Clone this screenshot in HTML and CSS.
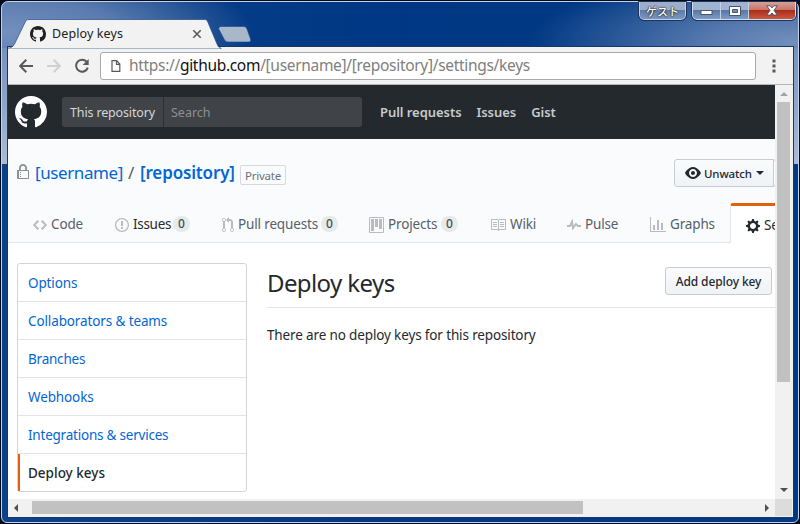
FILE: index.html
```
<!DOCTYPE html>
<html lang="en">
<head>
<meta charset="utf-8">
<title>Deploy keys</title>
<link rel="stylesheet" href="styles.css">
</head>
<body>
<svg class="defs" width="0" height="0">
  <symbol id="mark" viewBox="0 0 16 16"><path d="M8 0C3.58 0 0 3.58 0 8c0 3.54 2.29 6.53 5.47 7.59.4.07.55-.17.55-.38 0-.19-.01-.82-.01-1.49-2.01.37-2.53-.49-2.69-.94-.09-.23-.48-.94-.82-1.13-.28-.15-.68-.52-.01-.53.63-.01 1.08.58 1.23.82.72 1.21 1.87.87 2.33.66.07-.52.28-.87.51-1.07-1.78-.2-3.64-.89-3.64-3.95 0-.87.31-1.59.82-2.15-.08-.2-.36-1.02.08-2.12 0 0 .67-.21 2.2.82.64-.18 1.32-.27 2-.27.68 0 1.36.09 2 .27 1.53-1.04 2.2-.82 2.2-.82.44 1.1.16 1.92.08 2.12.51.56.82 1.27.82 2.15 0 3.07-1.87 3.75-3.65 3.95.29.25.54.73.54 1.48 0 1.07-.01 1.93-.01 2.2 0 .21.15.46.55.38A8.013 8.013 0 0 0 16 8c0-4.42-3.58-8-8-8z"/></symbol>
</svg>
<div class="window">
  <header class="titlebar">
    <svg class="tabshape" width="260" height="30" viewBox="0 0 260 30"><path d="M-1 29C3 29 5 28 6.500 25L17 3.500C18 1 19 .5 21 .5H196C198.500 .5 199 1 200 3.500L209 25C210.500 28 211 29 213 29V30H-1z" fill="#f2f2f2" stroke="#244a80" stroke-opacity=".7"/><path d="M212 7.500H235C237 7.500 238 8 239 10L242.500 20C243 22 242.500 23 240.500 23H220C218 23 217 22 216 20L210.500 9.500Z" fill="#a9b7cb" stroke="#1d4687" stroke-opacity=".6"/></svg>
    <div class="tab">
      <svg class="favicon" width="16" height="16"><use href="#mark"/></svg>
      <span class="tab-title">Deploy keys</span>
      <svg width="10" height="10" viewBox="0 0 10 10"><path d="M1.300 1.300l7.400 7.400M8.700 1.300L1.300 8.700" stroke="#5a5a5a" stroke-width="1.600"/></svg>
    </div>
    <div class="caption">
      <div class="guest">ゲスト</div>
      <div class="controls">
        <span class="ctl"><svg width="13" height="7"><rect x="1" y="1.500" width="11" height="4" fill="#fff" stroke="#4d5566"/></svg></span>
        <span class="ctl"><svg width="12" height="10"><path d="M.5.5h11v9H.5z" fill="#fff" stroke="#4d5566"/><path d="M3.500 3.500h5v3h-5z" fill="#6f8fbb" stroke="#4d5566"/></svg></span>
        <span class="ctl close"><svg width="12" height="11" viewBox="0 0 12 11"><path d="M.7.8h3.500L6 2.900 7.800.8h3.500L8 5.400l3.300 4.700H7.800L6 8 4.200 10.100H.7L4 5.400z" fill="#fff" stroke="#51536a"/></svg></span>
      </div>
    </div>
  </header>
  <div class="client">
    <div class="toolbar">
      <svg class="back" width="14" height="14" viewBox="0 0 14 14"><path d="M14 7H1.500M7.300.8L1.200 7l6.100 6.200" fill="none" stroke="#5a5a5a" stroke-width="2"/></svg>
      <svg class="forward" width="14" height="14" viewBox="0 0 14 14"><path d="M0 7h12.500M6.700.8L12.800 7l-6.100 6.200" fill="none" stroke="#d0d0d0" stroke-width="2"/></svg>
      <svg class="reload" width="16" height="16" viewBox="0 0 16 16"><path d="M12.600 3.700A6 6 0 1 0 13.800 9.600" fill="none" stroke="#5a5a5a" stroke-width="2"/><path d="M14.700 1v6H8.700z" fill="#5a5a5a"/></svg>
      <div class="omnibox">
        <svg width="10" height="12" viewBox="0 0 10 12"><path d="M1 .7h4.700L8.800 4v7.300H1zM5.500 1v3.300h3.300" fill="none" stroke="#5a5a5a" stroke-width="1.200"/></svg>
        <span class="url">https://<b>github.com</b>/[username]/[repository]/settings/keys</span>
      </div>
      <svg class="menu" width="4" height="14" viewBox="0 0 4 14"><path d="M.5.500h3v3h-3zM.5 5.500h3v3h-3zM.5 10.500h3v3h-3z" fill="#5a5a5a"/></svg>
    </div>
    <div class="viewport">
      <div class="page">
        <div class="gh-header">
          <svg class="gh-mark" width="32" height="32"><use href="#mark"/></svg>
          <div class="search"><span class="scope">This repository</span><span class="field">Search</span></div>
          <nav class="gh-nav"><a>Pull requests</a><a>Issues</a><a>Gist</a></nav>
        </div>
        <div class="repohead">
          <div class="repo-row">
            <svg class="lock" width="12" height="16" viewBox="0 0 12 16"><path d="M4 13H3v-1h1v1zm8-6v7c0 .55-.45 1-1 1H1c-.55 0-1-.45-1-1V7c0-.55.45-1 1-1h1V4c0-2.200 1.800-4 4-4s4 1.800 4 4v2h1c.55 0 1 .45 1 1zM3.800 6h4.410V4c0-1.220-.98-2.200-2.200-2.200-1.220 0-2.200.98-2.200 2.200v2H3.800zM11 7H2v7h9V7zM4 8H3v1h1V8zm0 2H3v1h1v-1z"/></svg>
            <a class="owner">[username]</a><span class="slash">/</span><a class="repo">[repository]</a><span class="label">Private</span>
            <div class="btn watch"><svg width="16" height="16" viewBox="0 0 16 16"><path d="M8.060 2C3 2 0 8 0 8s3 6 8.060 6C13 14 16 8 16 8s-3-6-7.940-6zM8 12c-2.200 0-4-1.780-4-4 0-2.200 1.800-4 4-4 2.220 0 4 1.800 4 4 0 2.220-1.780 4-4 4zm2-4c0 1.110-.89 2-2 2-1.110 0-2-.89-2-2 0-1.110.89-2 2-2 1.110 0 2 .89 2 2z"/></svg><span>Unwatch</span><i class="caret"></i></div>
            <div class="btn count"></div>
          </div>
          <nav class="tabs">
            <a class="t-code"><svg width="14" height="16" viewBox="0 0 14 16"><path d="M9.500 3L8 4.500 11.500 8 8 11.500 9.500 13 14 8 9.500 3zm-5 0L0 8l4.500 5L6 11.500 2.500 8 6 4.500 4.500 3z"/></svg><span>Code</span></a>
            <a class="t-issues"><svg width="14" height="16" viewBox="0 0 14 16"><path d="M7 2.300c3.140 0 5.700 2.560 5.700 5.700s-2.560 5.700-5.700 5.700A5.710 5.710 0 0 1 1.300 8c0-3.140 2.560-5.700 5.700-5.700zM7 1C3.140 1 0 4.140 0 8s3.140 7 7 7 7-3.140 7-7-3.140-7-7-7zm1 3H6v5h2V4zm0 6H6v2h2v-2z"/></svg><span>Issues</span><em>0</em></a>
            <a class="t-pulls"><svg width="12" height="16" viewBox="0 0 12 16"><path d="M11 11.280V5c-.03-.78-.34-1.470-.94-2.060C9.460 2.350 8.780 2.030 8 2H7V0L4 3l3 3V4h1c.27.02.48.11.69.31.21.2.3.42.31.69v6.280A1.993 1.993 0 0 0 10 15a1.993 1.993 0 0 0 1-3.720zm-1 2.920c-.66 0-1.200-.55-1.200-1.200 0-.65.55-1.200 1.200-1.200.65 0 1.200.55 1.200 1.200 0 .65-.55 1.200-1.200 1.200zM4 3c0-1.110-.89-2-2-2a1.993 1.993 0 0 0-1 3.720v6.560A1.993 1.993 0 0 0 2 15a1.993 1.993 0 0 0 1-3.720V4.720c.59-.34 1-.98 1-1.720zm-.8 10c0 .66-.55 1.200-1.200 1.200-.65 0-1.200-.55-1.200-1.200 0-.65.55-1.200 1.200-1.200.65 0 1.200.55 1.200 1.200zM2 4.200C1.340 4.200.8 3.650.8 3c0-.65.55-1.200 1.200-1.200.65 0 1.200.55 1.200 1.200 0 .65-.55 1.200-1.200 1.200z"/></svg><span>Pull requests</span><em>0</em></a>
            <a class="t-projects"><svg width="15" height="16" viewBox="0 0 15 16"><path fill-rule="evenodd" d="M10 12h3V2h-3v10zm-4-2h3V2H6v8zm-4 4h3V2H2v12zm-1 1h13V1H1v14zM14 0H1a1 1 0 0 0-1 1v14a1 1 0 0 0 1 1h13a1 1 0 0 0 1-1V1a1 1 0 0 0-1-1z"/></svg><span>Projects</span><em>0</em></a>
            <a class="t-wiki"><svg width="16" height="16" viewBox="0 0 16 16"><path d="M3 5h4v1H3V5zm0 3h4V7H3v1zm0 2h4V9H3v1zm11-5h-4v1h4V5zm0 2h-4v1h4V7zm0 2h-4v1h4V9zm2-6v9c0 .55-.45 1-1 1H9.500l-1 1-1-1H2c-.55 0-1-.45-1-1V3c0-.55.45-1 1-1h5.500l1 1 1-1H15c.55 0 1 .45 1 1zm-8 .5L7.500 3H2v9h6V3.500zm7-.5H9.500l-.5.5V12h6V3z"/></svg><span>Wiki</span></a>
            <a class="t-pulse"><svg width="14" height="16" viewBox="0 0 14 16"><path d="M11.500 8L8.800 5.400 6.600 8.500 5.500 1.600 2.380 8H0v2h3.600l.9-1.800.9 5.400L9 8.500l1.600 1.500H14V8h-2.500z"/></svg><span>Pulse</span></a>
            <a class="t-graphs"><svg width="16" height="16" viewBox="0 0 16 16"><path d="M16 14v1H0V0h1v14h15zM5 13H3V8h2v5zm4 0H7V3h2v10zm4 0h-2V6h2v7z"/></svg><span>Graphs</span></a>
            <a class="selected"><svg width="14" height="16" viewBox="0 0 14 16"><path d="M14 8.770v-1.600l-1.940-.64-.45-1.090.88-1.840-1.130-1.130-1.810.91-1.090-.45-.69-1.920h-1.600l-.63 1.940-1.110.45-1.840-.88-1.130 1.130.91 1.810-.45 1.090L0 7.230v1.590l1.940.64.45 1.090-.88 1.840 1.130 1.130 1.810-.91 1.090.45.69 1.920h1.590l.63-1.940 1.110-.45 1.840.88 1.130-1.130-.92-1.810.47-1.090L14 8.750v.02zM7 11c-1.660 0-3-1.340-3-3s1.340-3 3-3 3 1.340 3 3-1.340 3-3 3z"/></svg><span>Settings</span></a>
          </nav>
        </div>
        <div class="content">
          <nav class="side">
            <a>Options</a><a>Collaborators &amp; teams</a><a class="tight">Branches</a><a>Webhooks</a><a class="tight">Integrations &amp; services</a><a class="current">Deploy keys</a>
          </nav>
          <main>
            <div class="subhead"><h1>Deploy keys</h1><div class="btn add">Add deploy key</div></div>
            <p>There are no deploy keys for this repository</p>
          </main>
        </div>
      </div>
      <div class="vbar"><i class="arrow up"></i><div class="vthumb"></div><i class="arrow down"></i></div>
      <div class="hbar"><i class="arrow left"></i><div class="hthumb"></div><i class="arrow right"></i></div>
      <div class="corner"></div>
    </div>
  </div>
</div>
</body>
</html>
```
FILE: styles.css
```
* { box-sizing: border-box; }
body { margin: 0; background: #020b1c; font-family: "Noto Sans", "Noto Sans CJK JP", sans-serif; overflow: hidden; }
svg { display: block; flex: none; }
.defs { position: absolute; }

.window {
  width: 798px; height: 522px; margin: 1px 0 0 1px; padding: 0 6px;
  border: 1px solid #c3d2e8; border-radius: 7px 7px 6px 6px;
  background:
    linear-gradient(#7592bf, #aabbd6) left 46px / 6px 116px no-repeat,
    linear-gradient(#7592bf, #aabbd6) right 46px / 6px 116px no-repeat,
    radial-gradient(ellipse 250px 75px at 0 30px, #7390be 0, #5b7cb0 45%, transparent 100%) top / 100% 46px no-repeat,
    radial-gradient(ellipse 270px 70px at 100% 40px, #7390bc 0, #5477ad 35%, transparent 100%) top / 100% 46px no-repeat,
    linear-gradient(90deg, #0c428a, #003784 50%, #003a82);
}

.titlebar { height: 45px; position: relative; display: flex; justify-content: space-between; }
.tabshape { position: absolute; left: 0; top: 17px; }
.tab { position: relative; display: flex; align-items: center; width: 194px; height: 27px; margin: 18px 0 0 22px; }
.favicon { fill: #202020; }
.tab-title { width: 140px; margin-left: 6px; font-size: 12.5px; letter-spacing: .1px; color: #222; white-space: nowrap; }
.caption { display: flex; gap: 6px; margin-right: -4px; }
.guest {
  width: 47px; height: 18px; border: 1px solid #c3d0e3; border-top: 0; border-radius: 0 0 5px 5px; outline: 1px solid #1c335c;
  background: linear-gradient(#9caecb 0 50%, #5f7ba7 50%, #7b97c1);
  color: #fff; font: 500 11px/18px "Noto Sans CJK JP", sans-serif; text-align: center; text-shadow: 0 0 2px #000, 0 0 1px #000;
}
.controls {
  display: flex; width: 104px; height: 18px; border: 1px solid #d5deec; border-top: 0; border-radius: 0 0 5px 5px;
  outline: 1px solid #1c335c; overflow: hidden; background: linear-gradient(#a0b3d0 0 50%, #5977a7 50%, #7f9cc7);
}
.ctl { width: 28px; display: flex; align-items: center; justify-content: center; border-right: 1px solid #c3d0e3; }
.ctl:first-child { padding-top: 4px; }
.close { flex: 1; border: 0; background: linear-gradient(#d6a097 0, #c87468 48%, #ae2c1b 50%, #c85a3f); }

.client { width: 785px; height: 470px; background: #f2f2f2; box-shadow: 0 0 0 1px #17376b; }
.toolbar { height: 38px; display: flex; align-items: center; border-bottom: 1px solid #b5b5b5; padding-left: 11px; }
.forward { margin-left: 14px; }
.reload { margin-left: 13px; }
.omnibox { display: flex; align-items: center; width: 656px; height: 28px; margin-left: 10px; padding-left: 10px; border: 1px solid #a9a9a9; border-radius: 3px; background: #fff; }
.url { margin-left: 8px; font-size: 15.5px; letter-spacing: -.31px; color: #808080; white-space: nowrap; line-height: 24px; margin-top: -1px; }
.url b { font-weight: 400; color: #111; }
.menu { margin-left: 16px; }

.viewport { display: grid; grid-template: 414px 18px / 767px 18px; }
.page { overflow: hidden; background: #fff; }
.page > div { width: 767px; }
.gh-header { display: flex; align-items: center; height: 54px; padding-left: 7px; background: #24292e; }
.gh-mark { fill: #fff; }
.search { display: flex; width: 300px; height: 30px; margin-left: 15px; border-radius: 3px; background: #404448; font-size: 12.5px; line-height: 31px; white-space: nowrap; }
.scope { width: 102px; padding-left: 8px; border-right: 1px solid #2b3035; color: #d4d6d8; letter-spacing: -.15px; }
.field { padding-left: 7px; color: #8d9093; }
.gh-nav { display: flex; gap: 15px; margin-left: 18px; color: #c8cacc; font-size: 13px; font-weight: 600; letter-spacing: -.05px; white-space: nowrap; }

.repohead { height: 104px; background: #fafbfc; border-bottom: 1px solid #e1e4e8; }
.repo-row { display: flex; align-items: center; height: 64px; padding: 4px 0 0 9px; font-size: 17px; color: #0366d6; white-space: nowrap; }
.lock { fill: #8b9095; margin-bottom: 3px; }
.owner { width: 93px; margin-left: 6px; letter-spacing: -.4px; }
.slash { width: 12px; color: #586069; }
.repo { width: 100px; font-weight: 600; letter-spacing: -.15px; }
.owner, .slash, .repo { margin-bottom: 2px; }
.label { width: 46px; height: 20px; margin-top: 4px; border: 1px solid #d5d8dc; border-radius: 2px; text-align: center; font-size: 11.5px; line-height: 19px; letter-spacing: -.2px; color: #6a737d; }
.btn { display: flex; align-items: center; height: 28px; border: 1px solid #c8ccd0; border-radius: 3px; background: linear-gradient(#fafbfc, #eff3f6); color: #24292e; font-size: 12px; font-weight: 500; white-space: nowrap; }
.watch { width: 100px; margin-left: 388px; border-radius: 3px 0 0 3px; padding-left: 10px; font-size: 11.5px; letter-spacing: -.15px; }
.watch svg { fill: #24292e; margin-right: 3px; }
.caret { margin-left: 4px; border: 4px solid transparent; border-top-color: #24292e; border-bottom: 0; }
.watch, .label, .owner, .repo, .slash, .lock { flex: none; }
.count { flex: none; width: 30px; margin-left: -1px; background: #fff; }

.tabs { display: flex; height: 40px; font-size: 13.5px; letter-spacing: -.15px; color: #586069; white-space: nowrap; }
.tabs a { display: flex; align-items: center; flex: none; padding-top: 2px; }
.tabs svg { fill: #b8bbbf; margin-right: 4px; margin-top: 2px; }
.tabs em { display: block; width: 17px; height: 16px; margin-left: auto; border-radius: 9px; background: #e7e9eb; color: #444d56; font: 500 12px/16px "Noto Sans", sans-serif; text-align: center; letter-spacing: 0; }
.t-code { width: 82px; margin-left: 25px; }
.tabs .t-issues { width: 75px; color: #24292e; letter-spacing: -.3px; }
.t-pulls { width: 116px; margin-left: 32px; }
.t-projects { width: 89px; margin-left: 31px; }
.t-wiki { width: 77px; margin-left: 32px; }
.t-pulse { width: 83px; }
.t-graphs { width: 80px; }
.tabs .selected { height: 40px; width: 120px; padding: 0 0 0 15px; border-top: 3px solid #e36209; border-left: 1px solid #e1e4e8; border-radius: 3px 3px 0 0; background: #fff; color: #24292e; }
.selected svg { fill: #24292e; }

.content { display: flex; padding: 20px 0 0 9px; }
.side { flex: none; width: 230px; height: 229px; border: 1px solid #d1d5da; border-radius: 3px; font-size: 13.5px; letter-spacing: -.12px; color: #0366d6; }
.side a { display: block; height: 38px; padding-left: 10px; border-bottom: 1px solid #e1e4e8; line-height: 38px; }
.side .tight { letter-spacing: -.22px; }
.side .current { position: relative; border-bottom: 0; color: #24292e; font-weight: 500; letter-spacing: 0; }
.side .current::before { content: ""; position: absolute; left: 0; top: 0; width: 2px; height: 37px; background: #e36209; }
main { flex: 1; margin-left: 20px; }
.subhead { display: flex; justify-content: space-between; height: 45px; border-bottom: 1px solid #e1e4e8; }
h1 { margin: 0; font-size: 24px; font-weight: 400; line-height: 39px; letter-spacing: -.6px; color: #24292e; }
.add { width: 107px; margin: 4px 3px 0 0; justify-content: center; letter-spacing: -.1px; }
p { margin: 17px 0 0; font-size: 13.5px; line-height: 20px; letter-spacing: -.14px; color: #24292e; }

.vbar, .hbar { background: #f1f1f1; display: flex; align-items: center; }
.vbar { flex-direction: column; }
.vthumb { width: 13px; height: 280px; margin: 6px 0 0 -1px; background: #c1c1c1; }
.hthumb { width: 551px; height: 13px; margin: -1px 0 0 14px; background: #c1c1c1; }
.corner { background: #dcdcdc; border: solid #f2f2f2; border-width: 0 1px 1px 0; }
.arrow { width: 0; height: 0; border: 4px solid transparent; }
.up { margin-top: 7px; border-top: 0; border-bottom-color: #a3a3a3; }
.down { margin: auto 0 7px; border-bottom: 0; border-top-color: #505050; }
.left { margin-left: 6px; border-left: 0; border-right-color: #505050; }
.right { margin: 0 6px 0 auto; border-right: 0; border-left-color: #505050; }
```
